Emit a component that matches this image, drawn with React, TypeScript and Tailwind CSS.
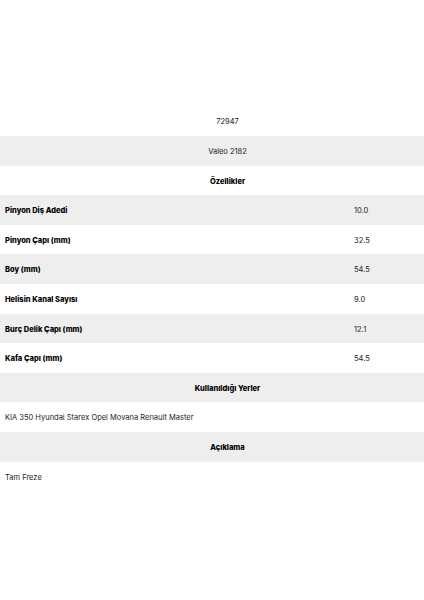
const specs: [string, string][] = [
  ["Pinyon Diş Adedi", "10.0"],
  ["Pinyon Çapı (mm)", "32.5"],
  ["Boy (mm)", "54.5"],
  ["Helisin Kanal Sayısı", "9.0"],
  ["Burç Delik Çapı (mm)", "12.1"],
  ["Kafa Çapı (mm)", "54.5"],
];

function Row({ gray, children }: { gray: boolean; children: React.ReactNode }) {
  return (
    <div className={`flex h-[29.6px] items-center pt-[1.5px] ${gray ? "bg-[#eeeeee]" : "bg-white"}`}>
      {children}
    </div>
  );
}

export default function App() {
  return (
    <div
      className="min-h-[600px] w-full bg-white pt-[106.5px] text-[7.5px] text-[#222]"
      style={{ fontFamily: "Inter, 'Noto Sans', sans-serif" }}
    >
      <Row gray={false}>
        <div className="w-full pl-[31px] text-center">72947</div>
      </Row>
      <Row gray>
        <div className="w-full pl-[31px] text-center">Valeo 2182</div>
      </Row>
      <Row gray={false}>
        <div className="w-full pl-[31px] text-center font-extrabold text-black">Özellikler</div>
      </Row>
      {specs.map(([label, value], i) => (
        <Row key={label} gray={i % 2 === 0}>
          <div className="flex-1 pl-[5px] font-extrabold text-black">{label}</div>
          <div className="w-[70px]">{value}</div>
        </Row>
      ))}
      <Row gray>
        <div className="w-full pl-[31px] text-center font-extrabold text-black">Kullanıldığı Yerler</div>
      </Row>
      <Row gray={false}>
        <div className="pl-[5px]">KIA 350 Hyundai Starex Opel Movana Renault Master</div>
      </Row>
      <Row gray>
        <div className="w-full pl-[31px] text-center font-extrabold text-black">Açıklama</div>
      </Row>
      <Row gray={false}>
        <div className="pl-[5px]">Tam Freze</div>
      </Row>
    </div>
  );
}
